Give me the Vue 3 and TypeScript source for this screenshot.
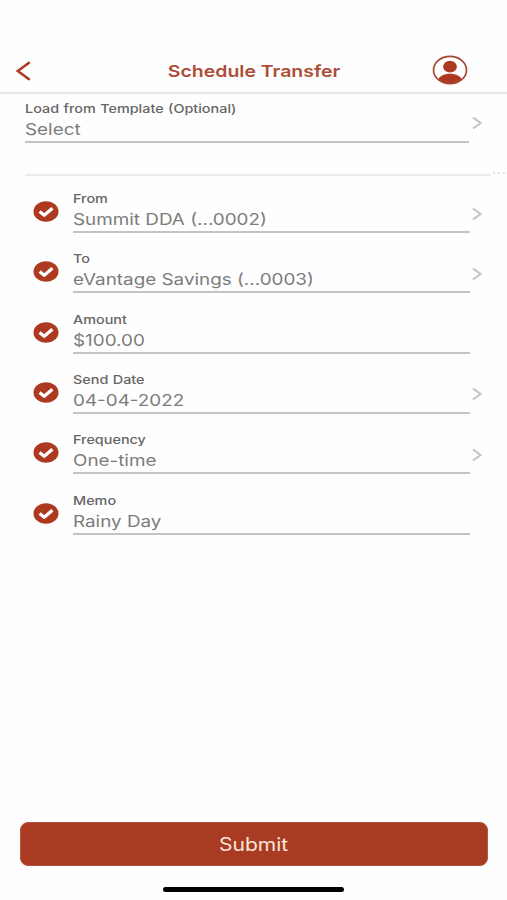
<script setup lang="ts">
interface Field {
  label: string
  value: string
  picker: boolean
}

const fields: Field[] = [
  { label: 'From', value: 'Summit DDA (...0002)', picker: true },
  { label: 'To', value: 'eVantage Savings (...0003)', picker: true },
  { label: 'Amount', value: '$100.00', picker: false },
  { label: 'Send Date', value: '04-04-2022', picker: true },
  { label: 'Frequency', value: 'One-time', picker: true },
  { label: 'Memo', value: 'Rainy Day', picker: false },
]
</script>

<template>
  <main class="screen">
    <header class="bar">
      <svg class="back" viewBox="0 0 14 20" preserveAspectRatio="none">
        <path d="M12.8 1.2 1.6 10l11.2 8.8" />
      </svg>
      <h1 class="title"><span class="wide">Schedule Transfer</span></h1>
      <svg class="avatar" viewBox="0 0 36 30">
        <clipPath id="ring"><ellipse cx="18" cy="15" rx="16.2" ry="13.6" /></clipPath>
        <g clip-path="url(#ring)">
          <ellipse cx="18" cy="11.6" rx="6.9" ry="5.9" />
          <path d="M6 30v-4.500C7 21 12 18.700 18 18.700S29 21 30 25.500V30Z" />
        </g>
        <ellipse class="outline" cx="18" cy="15" rx="16.500" ry="13.700" />
      </svg>
    </header>

    <section class="template">
      <div class="field">
        <div class="label"><span class="wide">Load from Template (Optional)</span></div>
        <div class="value"><span class="wide">Select</span></div>
      </div>
      <svg class="chevron" viewBox="0 0 10 14"><path d="M1 1.500 8.600 7 1 12.500" /></svg>
    </section>

    <div class="divider">
      <i class="rule"></i>
      <i class="dots"><b></b><b></b><b></b></i>
    </div>

    <section class="rows">
      <div v-for="f in fields" :key="f.label" class="row">
        <svg class="check" viewBox="0 0 26 21">
          <ellipse cx="13" cy="10.500" rx="12.500" ry="10.300" />
          <path d="M6.600 10.400 11.200 14.200 19.400 7.300" />
        </svg>
        <div class="field">
          <div class="label"><span class="wide">{{ f.label }}</span></div>
          <div class="value"><span class="wide">{{ f.value }}</span></div>
        </div>
        <svg v-if="f.picker" class="chevron" viewBox="0 0 10 14"><path d="M1 1.500 8.600 7 1 12.500" /></svg>
      </div>
    </section>

    <footer class="footer">
      <button class="submit" type="button"><span class="wide">Submit</span></button>
      <div class="home"></div>
    </footer>
  </main>
</template>

<style>
body {
  background: #fefefe;
}
</style>

<style scoped>
.screen {
  display: flex;
  flex-direction: column;
  box-sizing: border-box;
  width: 507px;
  height: 900px;
  overflow: hidden;
  font-family: Inter, 'Liberation Sans', sans-serif;
  background: #fefefe;
}
.wide {
  display: inline-block;
  white-space: nowrap;
  transform: scaleX(1.2);
  transform-origin: left center;
}
.bar {
  display: grid;
  grid-template-columns: 60px 1fr 60px;
  align-items: center;
  box-sizing: border-box;
  height: 94px;
  padding: 48px 27px 0 16px;
  border-bottom: 2px solid #e6e6e6;
}
.back {
  width: 15px;
  height: 20px;
  margin-top: 2px;
  fill: none;
  stroke: #a83c24;
  stroke-width: 2.4;
}
.title {
  margin: 2px 0 0 13px;
  text-align: center;
  font-size: 16.5px;
  font-weight: 600;
  line-height: 22px;
  color: #ad4d38;
}
.title .wide {
  transform: scaleX(1.18);
  transform-origin: center;
}
.avatar {
  justify-self: center;
  width: 36px;
  height: 30px;
  fill: #ad3a20;
}
.outline {
  fill: none;
  stroke: #a84630;
  stroke-width: 1.7;
}
.template {
  display: flex;
  padding: 3px 0 0 25px;
}
.field {
  box-sizing: border-box;
  width: 397px;
  height: 46px;
  padding-top: 4px;
  border-bottom: 2px solid #c4c4c4;
}
.template .field {
  width: 444px;
}
.label {
  height: 17px;
  font-size: 12px;
  font-weight: 500;
  line-height: 16px;
  word-spacing: 0.5px;
  color: #666;
}
.value {
  height: 22px;
  font-size: 16px;
  line-height: 22px;
  color: #7c7c7c;
}
.value .wide {
  transform: scaleX(1.178);
}
.chevron {
  width: 10px;
  height: 14px;
  margin: 19.5px 0 0 2px;
  fill: none;
  stroke: #c2c2c2;
  stroke-width: 1.9;
}
.template .chevron {
  margin: 19px 0 0 3px;
}
.divider {
  display: flex;
  align-items: flex-end;
  height: 33px;
  padding-left: 25px;
}
.rule {
  width: 466px;
  height: 2px;
  background: #ebebeb;
}
.dots {
  display: flex;
  gap: 3px;
  height: 4px;
  padding-left: 2px;
}
.dots b {
  width: 2px;
  height: 2px;
  background: #e2e2e2;
}
.rows {
  display: grid;
  grid-auto-rows: 46px;
  row-gap: 14.32px;
  padding: 11px 0 0 33px;
}
.row {
  display: flex;
}
.check {
  width: 26px;
  height: 21px;
  margin: 14px 14px 0 0;
  fill: #ad3a20;
}
.check path {
  fill: none;
  stroke: #fff;
  stroke-width: 3.3;
  stroke-linejoin: round;
}
.footer {
  margin-top: auto;
  padding: 0 19px 8px 20px;
}
.submit {
  display: block;
  width: 100%;
  height: 44px;
  padding: 1px 0 0;
  border: 1px solid #b3563f;
  border-radius: 8px;
  font-family: inherit;
  font-size: 18px;
  line-height: 42px;
  color: #fbe6dc;
  background: #a93b22;
}
.submit .wide {
  transform: scaleX(1.17);
  transform-origin: center;
}
.home {
  width: 181px;
  height: 5px;
  margin: 21px auto 0 143px;
  border-radius: 3px;
  background: #000;
}
</style>
